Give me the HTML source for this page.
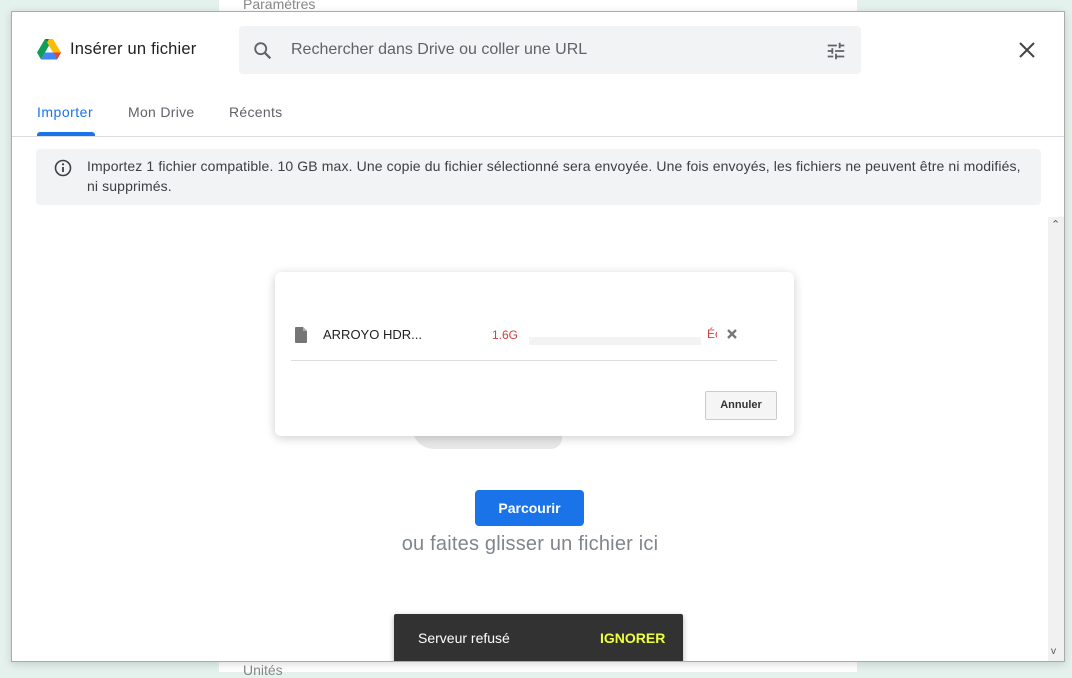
<!DOCTYPE html>
<html><head><meta charset="utf-8"><style>
*{margin:0;padding:0;box-sizing:border-box}
body{width:1072px;height:672px;overflow:hidden;background:#e4f1ec;font-family:"Liberation Sans",Arial,sans-serif;position:relative}
.col{position:absolute;left:219px;top:0;width:638px;height:672px;background:#fff}
.col span{position:absolute;left:24px;color:#888;font-size:14px}
.dlg{position:absolute;left:11px;top:11px;width:1054px;height:651px;background:#fff;border:1px solid #aaa;box-shadow:0 2px 8px rgba(0,0,0,.15);overflow:hidden}
.abs{position:absolute}
</style></head><body>
<div class="col"><span style="top:-4px">Paramètres</span><span style="top:662px">Unités</span></div>
<div class="dlg">
 <svg class="abs" style="left:25px;top:27px" width="24" height="21" viewBox="0 0 24 21">
  <path d="M8 0h8l8 13.5h-8z" fill="#fbbc04"/>
  <path d="M8 0L0 13.5l4 7 8-14z" fill="#0f9d58"/>
  <path d="M4 20.5h16l4-7H8z" fill="#4285f4"/>
  <path d="M20 20.5l4-7h-7z" fill="#ea4335"/>
  <path d="M8 0h4l-2 3.5z" fill="#188038"/>
 </svg>
 <div class="abs" style="left:58px;top:28px;font-size:16.5px;letter-spacing:.2px;color:#202124">Insérer un fichier</div>
 <div class="abs" style="left:227px;top:14px;width:622px;height:48px;background:#f1f3f4;border-radius:4px"></div>
 <svg class="abs" style="left:240px;top:28px" width="22" height="22" viewBox="0 0 24 24"><circle cx="9.5" cy="9.5" r="6" fill="none" stroke="#5f6368" stroke-width="2"/><path d="M14 14l6 6" stroke="#5f6368" stroke-width="2.4"/></svg>
 <div class="abs" style="left:279px;top:29px;font-size:16px;color:#5f6368">Rechercher dans Drive ou coller une URL</div>
 <svg class="abs" style="left:813px;top:28px" width="22" height="22" viewBox="0 0 24 24" fill="#5f6368"><path d="M3 17v2h6v-2H3zM3 5v2h10V5H3zm10 16v-2h8v-2h-8v-2h-2v6h2zM7 9v2H3v2h4v2h2V9H7zm14 4v-2H11v2h10zm-6-4h2V7h4V5h-4V3h-2v6z"/></svg>
 <svg class="abs" style="left:1006px;top:29px" width="18" height="18" viewBox="0 0 18 18"><path d="M2 2l14 14M16 2L2 16" stroke="#444" stroke-width="2"/></svg>
 <div class="abs" style="left:25px;top:92px;font-size:14px;letter-spacing:.5px;color:#1a73e8">Importer</div>
 <div class="abs" style="left:25px;top:120px;width:58px;height:4px;background:#1a73e8;border-radius:3px 3px 0 0"></div>
 <div class="abs" style="left:116px;top:92px;font-size:14px;letter-spacing:.3px;color:#5f6368">Mon Drive</div>
 <div class="abs" style="left:217px;top:92px;font-size:14px;letter-spacing:.3px;color:#5f6368">Récents</div>
 <div class="abs" style="left:0;top:124px;width:1054px;height:1px;background:#dadce0"></div>
 <div class="abs" style="left:24px;top:137px;width:1005px;height:56px;background:#f1f3f4;border-radius:4px"></div>
 <svg class="abs" style="left:41px;top:146px" width="20" height="20" viewBox="0 0 20 20"><circle cx="10" cy="10" r="7.5" fill="none" stroke="#3c4043" stroke-width="1.6"/><path d="M10 9v5" stroke="#3c4043" stroke-width="1.8"/><circle cx="10" cy="6.3" r="1.1" fill="#3c4043"/></svg>
 <div class="abs" style="left:75px;top:144px;width:945px;font-size:14px;letter-spacing:.12px;line-height:20px;color:#3c4043">Importez 1 fichier compatible. 10 GB max. Une copie du fichier sélectionné sera envoyée. Une fois envoyés, les fichiers ne peuvent être ni modifiés,<br>ni supprimés.</div>
 <div class="abs" style="left:1036px;top:205px;width:17px;height:446px;background:#f1f1f1"></div>
 <div class="abs" style="left:1039px;top:206px;font-size:11px;color:#555">&#8963;</div>
 <div class="abs" style="left:1039px;top:634px;font-size:10px;color:#555">v</div>
 <div class="abs" style="left:400px;top:415px;width:150px;height:22px;background:#e8e8e8;border-radius:0 0 30px 60px"></div>
 <div class="abs" style="left:263px;top:260px;width:519px;height:164px;background:#fff;border-radius:6px;box-shadow:0 2px 10px rgba(0,0,0,.2)">
  <svg class="abs" style="left:20px;top:55px" width="12" height="16" viewBox="0 0 12 16"><path d="M1 0h7l4 4v11a1 1 0 0 1-1 1H1a1 1 0 0 1-1-1V1a1 1 0 0 1 1-1z" fill="#757575"/><path d="M8 0v4h4" fill="#aaa"/></svg>
  <div class="abs" style="left:48px;top:55px;font-size:13px;color:#222">ARROYO HDR...</div>
  <div class="abs" style="left:217px;top:56px;font-size:12px;color:#d23f3f">1.6G</div>
  <div class="abs" style="left:254px;top:65px;width:172px;height:8px;background:#f3f3f3"></div>
  <div class="abs" style="left:432px;top:55px;width:10px;overflow:hidden;font-size:12px;color:#d23f3f">Éc</div>
  <svg class="abs" style="left:451px;top:56px" width="12" height="12" viewBox="0 0 12 12"><path d="M2 2l8 8M10 2l-8 8" stroke="#777" stroke-width="2.4"/></svg>
  <div class="abs" style="left:16px;top:88px;width:486px;height:1px;background:#ddd"></div>
  <div class="abs" style="left:430px;top:119px;width:72px;height:29px;background:#f5f5f5;border:1px solid #ccc;border-radius:2px;font-size:11px;font-weight:bold;color:#333;text-align:center;line-height:27px">Annuler</div>
 </div>
 <div class="abs" style="left:463px;top:478px;width:109px;height:36px;background:#1a73e8;border-radius:4px;color:#fff;font-size:14px;font-weight:bold;text-align:center;line-height:36px">Parcourir</div>
 <div class="abs" style="left:0;width:1036px;top:521px;text-align:center;font-size:20px;letter-spacing:.2px;color:#80868b">ou faites glisser un fichier ici</div>
 <div class="abs" style="left:382px;top:602px;width:289px;height:49px;background:#323232;border-radius:2px;box-shadow:0 2px 6px rgba(0,0,0,.3)">
  <div class="abs" style="left:24px;top:16px;font-size:14px;color:#fff">Serveur refusé</div>
  <div class="abs" style="left:206px;top:16px;font-size:14px;font-weight:bold;color:#eeff41">IGNORER</div>
 </div>
</div>
</body></html>
